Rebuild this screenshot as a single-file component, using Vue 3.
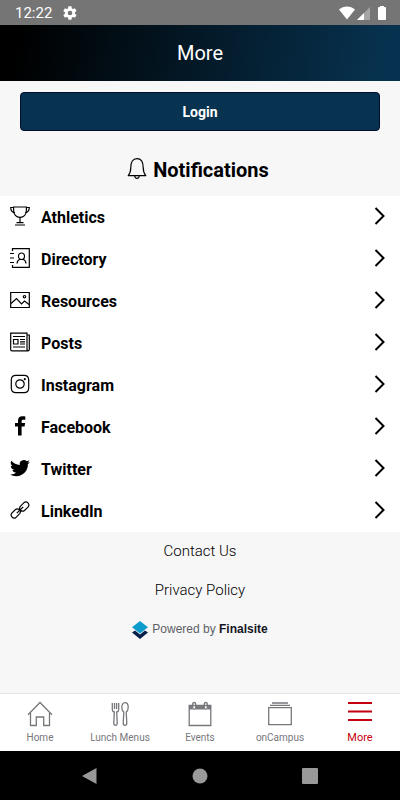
<template>
  <div class="screen">
    <!-- System status bar -->
    <div class="status-bar">
      <span class="time">12:22</span>
      <svg class="gear" width="16" height="16" viewBox="0 0 24 24">
        <path d="M19.4 13c0-.3.1-.6.1-1s0-.7-.1-1l2.1-1.6c.2-.2.3-.4.1-.7l-2-3.4c-.1-.2-.4-.3-.6-.2l-2.5 1c-.5-.4-1.1-.7-1.7-1l-.4-2.6c0-.3-.2-.5-.5-.5h-4c-.2 0-.4.2-.5.5L9 5.1c-.6.3-1.2.6-1.7 1l-2.5-1c-.2-.1-.5 0-.6.2l-2 3.4c-.1.2-.1.5.1.7L4.500 11c0 .3-.1.6-.1 1s0 .7.1 1l-2.2 1.600c-.2.2-.2.4-.1.7l2 3.400c.1.2.4.3.6.2l2.500-1c.5.4 1.100.7 1.700 1l.4 2.600c0 .3.2.5.5.5h4c.2 0 .5-.2.5-.5l.4-2.600c.6-.3 1.200-.6 1.700-1l2.500 1c.2.1.5 0 .6-.2l2-3.400c.1-.2.1-.5-.1-.7zM12 15.500a3.500 3.500 0 1 1 0-7 3.500 3.500 0 0 1 0 7z" fill="#fff" />
      </svg>
      <svg class="signals" width="47" height="16" viewBox="0 0 47 16">
        <path d="M8 14.500L0 4.500c4.500-4 11.500-4 16 0z" fill="#fff" />
        <path d="M31 2v13H18z" fill="#a5a5a5" />
        <path d="M25 8v7h-7z" fill="#fff" />
        <path d="M40 2h1V1h4v1h1q1 0 1 1v11q0 1-1 1h-6q-1 0-1-1V3q0-1 1-1z" fill="#fff" />
      </svg>
    </div>

    <header class="header">
      <h1>More</h1>
    </header>

    <main class="content">
      <button type="button" class="login">Login</button>

      <h2 class="notifications">
        <svg width="20" height="22" viewBox="0 0 20 22" fill="none" stroke="#000" stroke-width="1.2">
          <path d="M1.200 17.600c2.400-2.500 2.600-4 2.600-8 0-5.500 2-8.900 6.200-8.900s6.200 3.400 6.200 8.900c0 4 .2 5.500 2.600 8z" stroke-linejoin="round" />
          <path d="M7.800 18c.3 3.200 4.100 3.200 4.400 0" />
        </svg>
        Notifications
      </h2>

      <nav class="menu">
        <a v-for="item in menuItems" :key="item.label" href="#" class="menu-item">
          <svg class="menu-icon" :class="{ solid: item.solid }" viewBox="0 0 20 20">
            <path v-for="d in item.paths" :key="d" :d="d" />
          </svg>
          <span>{{ item.label }}</span>
          <svg class="chevron" width="12" height="18" viewBox="0 0 12 18">
            <path d="M1.500 1L9.500 9l-8 8" />
          </svg>
        </a>
      </nav>

      <footer class="footer">
        <a href="#">Contact Us</a>
        <a href="#">Privacy Policy</a>
        <a href="#" class="powered">
          <svg width="16" height="18" viewBox="0 0 16 18">
            <path d="M0 11.500l3-2 5 4 5-4 3 2L8 18z" fill="#0b1f4b" />
            <path d="M8 0l8 6.300-8 6.200-8-6.200z" fill="#0d9bcb" />
          </svg>
          <span>Powered by <b>Finalsite</b></span>
        </a>
      </footer>
    </main>

    <nav class="tabs">
      <a v-for="tab in tabs" :key="tab.label" href="#" class="tab" :class="{ active: tab.active }">
        <svg width="26" height="26" viewBox="0 0 26 26">
          <path v-for="d in tab.paths" :key="d" :d="d" />
          <path v-if="tab.fill" class="filled" :d="tab.fill" />
        </svg>
        <span>{{ tab.label }}</span>
      </a>
    </nav>

    <!-- System navigation -->
    <div class="system-nav">
      <button type="button" aria-label="Back">
        <svg width="18" height="18" viewBox="0 0 18 18"><path d="M15.500 1v16L1 9z" /></svg>
      </button>
      <button type="button" aria-label="Home">
        <svg width="18" height="18" viewBox="0 0 18 18"><circle cx="9" cy="9" r="7.500" /></svg>
      </button>
      <button type="button" aria-label="Recent apps">
        <svg width="18" height="18" viewBox="0 0 18 18"><rect x="1" y="1" width="16" height="16" rx="1" /></svg>
      </button>
    </div>
  </div>
</template>

<script setup>
const menuItems = [
  {
    label: 'Athletics',
    paths: [
      'M3.600 1h12.800v3c0 4.500-2.500 7.300-6.400 7.300S3.600 8.500 3.600 4z',
      'M3.600 1.500H.700c0 3 1.500 4.800 4.300 5.500M16.400 1.500h2.900c0 3-1.500 4.800-4.300 5.500',
      'M10 11.500V16.500M6.500 16.700h7M5 19h10'
    ]
  },
  {
    label: 'Directory',
    paths: [
      'M2.500 3V.7h16.800v18.600H2.500V17',
      'M0 5.500h4M0 10h4M0 14.500h4',
      'M11.500 5a3 3 0 0 1 3 3.200c0 1.800-1.300 3.300-3 3.300s-3-1.500-3-3.300a3 3 0 0 1 3-3.200z',
      'M7 15.500c.2-2.300 1.300-3.700 3-4.300M16 15.500c-.2-2.300-1.300-3.700-3-4.300'
    ]
  },
  {
    label: 'Resources',
    paths: [
      'M.7 2.500h18.600v15H.7z',
      'M1 13.500l5.500-5 5 5.500 3-3 4.500 3.500',
      'M14.500 5.500a1.200 1.200 0 1 1 0 2.400 1.200 1.200 0 0 1 0-2.400z'
    ]
  },
  {
    label: 'Posts',
    paths: [
      'M17 3h2.300v14.500q0 1.300-1.500 1.300H2q-1.300 0-1.300-1.300V1.200H17V17q0 1.500 1 1.800',
      'M3.500 7.500H8v4.500H3.500z',
      'M3 4.500h12M10 7.500h5M10 9.800h5M10 12h5M3 15h12'
    ]
  },
  {
    label: 'Instagram',
    paths: [
      'M6 1.300h8q4.700 0 4.700 4.700v8q0 4.700-4.700 4.700H6q-4.700 0-4.700-4.700V6q0-4.700 4.700-4.700z',
      'M10 5.800a4.200 4.200 0 1 1 0 8.400 4.200 4.200 0 0 1 0-8.400z',
      'M14.800 4.700a.5.5 0 1 1 0 1 .5.5 0 0 1 0-1z'
    ]
  },
  {
    label: 'Facebook',
    solid: true,
    paths: ['M8 19.500v-9H5V7h3V4.700C8 1.800 9.600.3 12.300.3c1.200 0 2.300.1 3 .2v3.200h-1.900c-1.500 0-1.800.7-1.800 1.700V7h3.500l-.5 3.500h-3v9z']
  },
  {
    label: 'Twitter',
    solid: true,
    paths: ['M20 3.900c-.7.3-1.500.5-2.400.6.900-.5 1.500-1.300 1.800-2.200-.8.500-1.700.8-2.600 1a4.100 4.100 0 0 0-7 3.700A11.700 11.700 0 0 1 1.400 2.800a4.100 4.100 0 0 0 1.300 5.400c-.7 0-1.300-.2-1.900-.5 0 2 1.400 3.700 3.300 4.100-.6.200-1.200.2-1.800.1a4.100 4.100 0 0 0 3.800 2.800A8.200 8.200 0 0 1 0 16.400a11.600 11.600 0 0 0 6.300 1.800c7.500 0 11.900-6.400 11.600-12.200.8-.6 1.500-1.300 2.100-2.100z']
  },
  {
    label: 'LinkedIn',
    paths: [
      'M10.300 6.300l3.700-3.700a3 3 0 0 1 4.200 4.200l-3.700 3.700a3 3 0 0 1-4.200-4.200z',
      'M9.700 13.700l-3.700 3.700a3 3 0 0 1-4.200-4.200l3.700-3.700a3 3 0 0 1 4.200 4.200z',
      'M6.800 13.200l6.400-6.400'
    ]
  }
]

const tabs = [
  {
    label: 'Home',
    paths: ['M1 13.800L13 1.500l12 12.300M3.500 12v12.500h5.800V16h7.400v8.500h5.800V12']
  },
  {
    label: 'Lunch Menus',
    paths: [
      'M5.300 2v6.500q0 2 2 2.500L6.800 22q0 2.300 1.700 2.300t1.700-2.300L9.700 11q2-.5 2-2.500V2M7.500 2v6M9.600 2v6',
      'M18 1.700c2 0 3.200 2 3.200 4.600 0 2.300-.8 4-2 4.700l.6 11q0 2.300-1.800 2.300t-1.800-2.300l.6-11c-1.200-.7-2-2.400-2-4.700 0-2.600 1.200-4.600 3.200-4.600z'
    ]
  },
  {
    label: 'Events',
    paths: [
      'M2.200 4.500h21.600v20H2.200z',
      'M5.700 3q0-1.500 1.500-1.500T8.700 3v4q0 1.200-1.500 1.200T5.700 7zM17.300 3q0-1.500 1.500-1.500T20.300 3v4q0 1.200-1.500 1.200T17.300 7z'
    ],
    fill: 'M2 4h3.500v4.500H2zM9 4h8v4.500H9zM20.500 4H24v4.500h-3.500z'
  },
  {
    label: 'onCampus',
    paths: ['M1.700 6.600h22.600v17H1.700z', 'M3 4.300h20M5 2h16']
  },
  {
    label: 'More',
    active: true,
    paths: ['M1 2h24M1 10.500h24M1 19h24']
  }
]
</script>

<style>
body {
  margin: 0;
}
</style>

<style scoped>
.screen {
  display: flex;
  flex-direction: column;
  min-height: 100vh;
  background: #f7f7f7;
  color: #000;
  font-family: Roboto, 'Liberation Sans', sans-serif;
}

a {
  color: inherit;
  text-decoration: none;
}

.status-bar {
  display: flex;
  align-items: center;
  height: 25px;
  padding: 0 14px 0 15px;
  background: #757575;
  color: #fff;
}

.time {
  font-size: 15px;
  line-height: 24px;
}

.gear {
  margin-left: 10px;
}

.signals {
  margin-left: auto;
}

.header {
  display: flex;
  align-items: center;
  justify-content: center;
  height: 56px;
  background: linear-gradient(100deg, #000 5%, #07324f 95%);
  color: #fff;
}

.header h1 {
  margin: 0;
  font-size: 20px;
  font-weight: 400;
  line-height: 28px;
}

.content {
  flex: 1;
}

.login {
  display: block;
  width: calc(100% - 40px);
  height: 39px;
  margin: 11px 20px 0;
  border: 1px solid #020c2e;
  border-radius: 4px;
  background: #083350;
  color: #fff;
  font-family: inherit;
  font-size: 14px;
  font-weight: 700;
}

.notifications {
  display: flex;
  align-items: center;
  justify-content: center;
  gap: 6px;
  height: 65px;
  margin: 0;
  padding: 12px 4px 0 0;
  box-sizing: border-box;
  font-size: 20px;
  font-weight: 700;
}

.notifications svg {
  margin-bottom: 2px;
}

.menu {
  background: #fff;
}

.menu-item {
  display: flex;
  align-items: center;
  height: 42px;
  padding: 0 14px 0 10px;
  font-size: 16px;
  font-weight: 700;
}

.menu-item svg {
  margin-bottom: 2px;
}

.menu-icon {
  width: 20px;
  height: 20px;
  margin-right: 11px;
  fill: none;
  stroke: #000;
  stroke-width: 1.2;
  overflow: visible;
}

.menu-icon.solid {
  fill: #000;
  stroke: none;
}

.chevron {
  margin-left: auto;
  fill: none;
  stroke: #000;
  stroke-width: 2;
}

.footer {
  display: flex;
  flex-direction: column;
  align-items: center;
  font-size: 15px;
  font-weight: 300;
  line-height: 39px;
}

.powered {
  display: flex;
  align-items: center;
  gap: 4px;
  color: #5c5f66;
  font-family: 'Liberation Sans', sans-serif;
  font-size: 12px;
  font-weight: 400;
}

.powered b {
  color: #14161f;
}

.tabs {
  display: grid;
  grid-template-columns: repeat(5, 1fr);
  height: 58px;
  box-sizing: border-box;
  border-top: 1px solid #e4e4e4;
  background: #fff;
}

.tab {
  display: flex;
  flex-direction: column;
  align-items: center;
  padding-top: 7px;
  color: #77777c;
  font-size: 10px;
  line-height: 22px;
}

.tab svg {
  fill: none;
  stroke: currentColor;
  stroke-width: 1.3;
}

.tab .filled {
  fill: currentColor;
  stroke: none;
}

.tab.active {
  color: #c4000f;
  font-size: 11px;
}

.tab.active svg {
  stroke-width: 1.8;
}

.system-nav {
  display: flex;
  align-items: center;
  justify-content: center;
  gap: 92px;
  height: 49px;
  background: #000;
}

.system-nav button {
  display: flex;
  padding: 0;
  border: 0;
  background: none;
}

.system-nav svg {
  fill: #999;
}
</style>
